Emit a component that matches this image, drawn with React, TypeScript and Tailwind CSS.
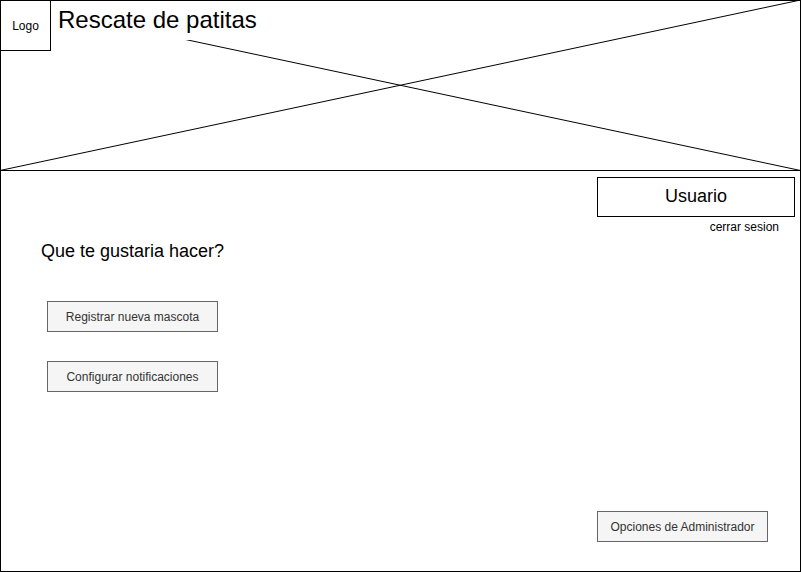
export default function App() {
  return (
    <div
      className="relative flex h-[572px] w-[801px] flex-col overflow-hidden border border-black bg-white text-black"
      style={{ fontFamily: '"Liberation Sans", Arial, sans-serif' }}
    >
      {/* header image placeholder */}
      <header className="relative h-[170px] shrink-0 border-b border-black">
        <svg className="absolute left-[-1px] top-[-1px]" width="801" height="172" viewBox="0 0 801 172">
          <line x1="0" y1="170.5" x2="800.5" y2="0" stroke="#000" strokeWidth="1" />
          <line x1="0" y1="0" x2="800.5" y2="170.5" stroke="#000" strokeWidth="1" />
        </svg>
        <div className="absolute left-[-1px] top-[-1px] flex h-[51px] w-[51px] items-center justify-center border border-black bg-white text-[12px]">
          Logo
        </div>
        <div className="absolute left-[50px] top-[-1px] h-[40px] w-[230px] bg-white pl-[7px] pt-[5px] text-[24px] leading-[29px]">
          Rescate de patitas
        </div>
      </header>

      <main className="flex flex-1 flex-col">
        <div className="mr-[5px] mt-[6px] flex justify-end">
          <div className="flex h-[40px] w-[198px] items-center justify-center border border-black pb-[1px] text-[18px]">
            Usuario
          </div>
        </div>
        <p className="mr-[21px] mt-[3px] self-end text-[12px] leading-[14px]">cerrar sesion</p>

        <h1 className="ml-[40px] mt-[7px] text-[18px] leading-[21px]">Que te gustaria hacer?</h1>

        <div className="ml-[46px] mt-[39px] flex flex-col gap-[29px]">
          <button className="flex h-[31px] w-[171px] items-center justify-center border border-[#666666] bg-[#f5f5f5] text-[12px] text-[#333333]">
            Registrar nueva mascota
          </button>
          <button className="flex h-[31px] w-[171px] items-center justify-center border border-[#666666] bg-[#f5f5f5] text-[12px] text-[#333333]">
            Configurar notificaciones
          </button>
        </div>

        <div className="mb-[29px] mr-[32px] mt-auto flex justify-end">
          <button className="flex h-[31px] w-[171px] items-center justify-center border border-[#666666] bg-[#f5f5f5] text-[12px] text-[#333333]">
            Opciones de Administrador
          </button>
        </div>
      </main>
    </div>
  );
}
